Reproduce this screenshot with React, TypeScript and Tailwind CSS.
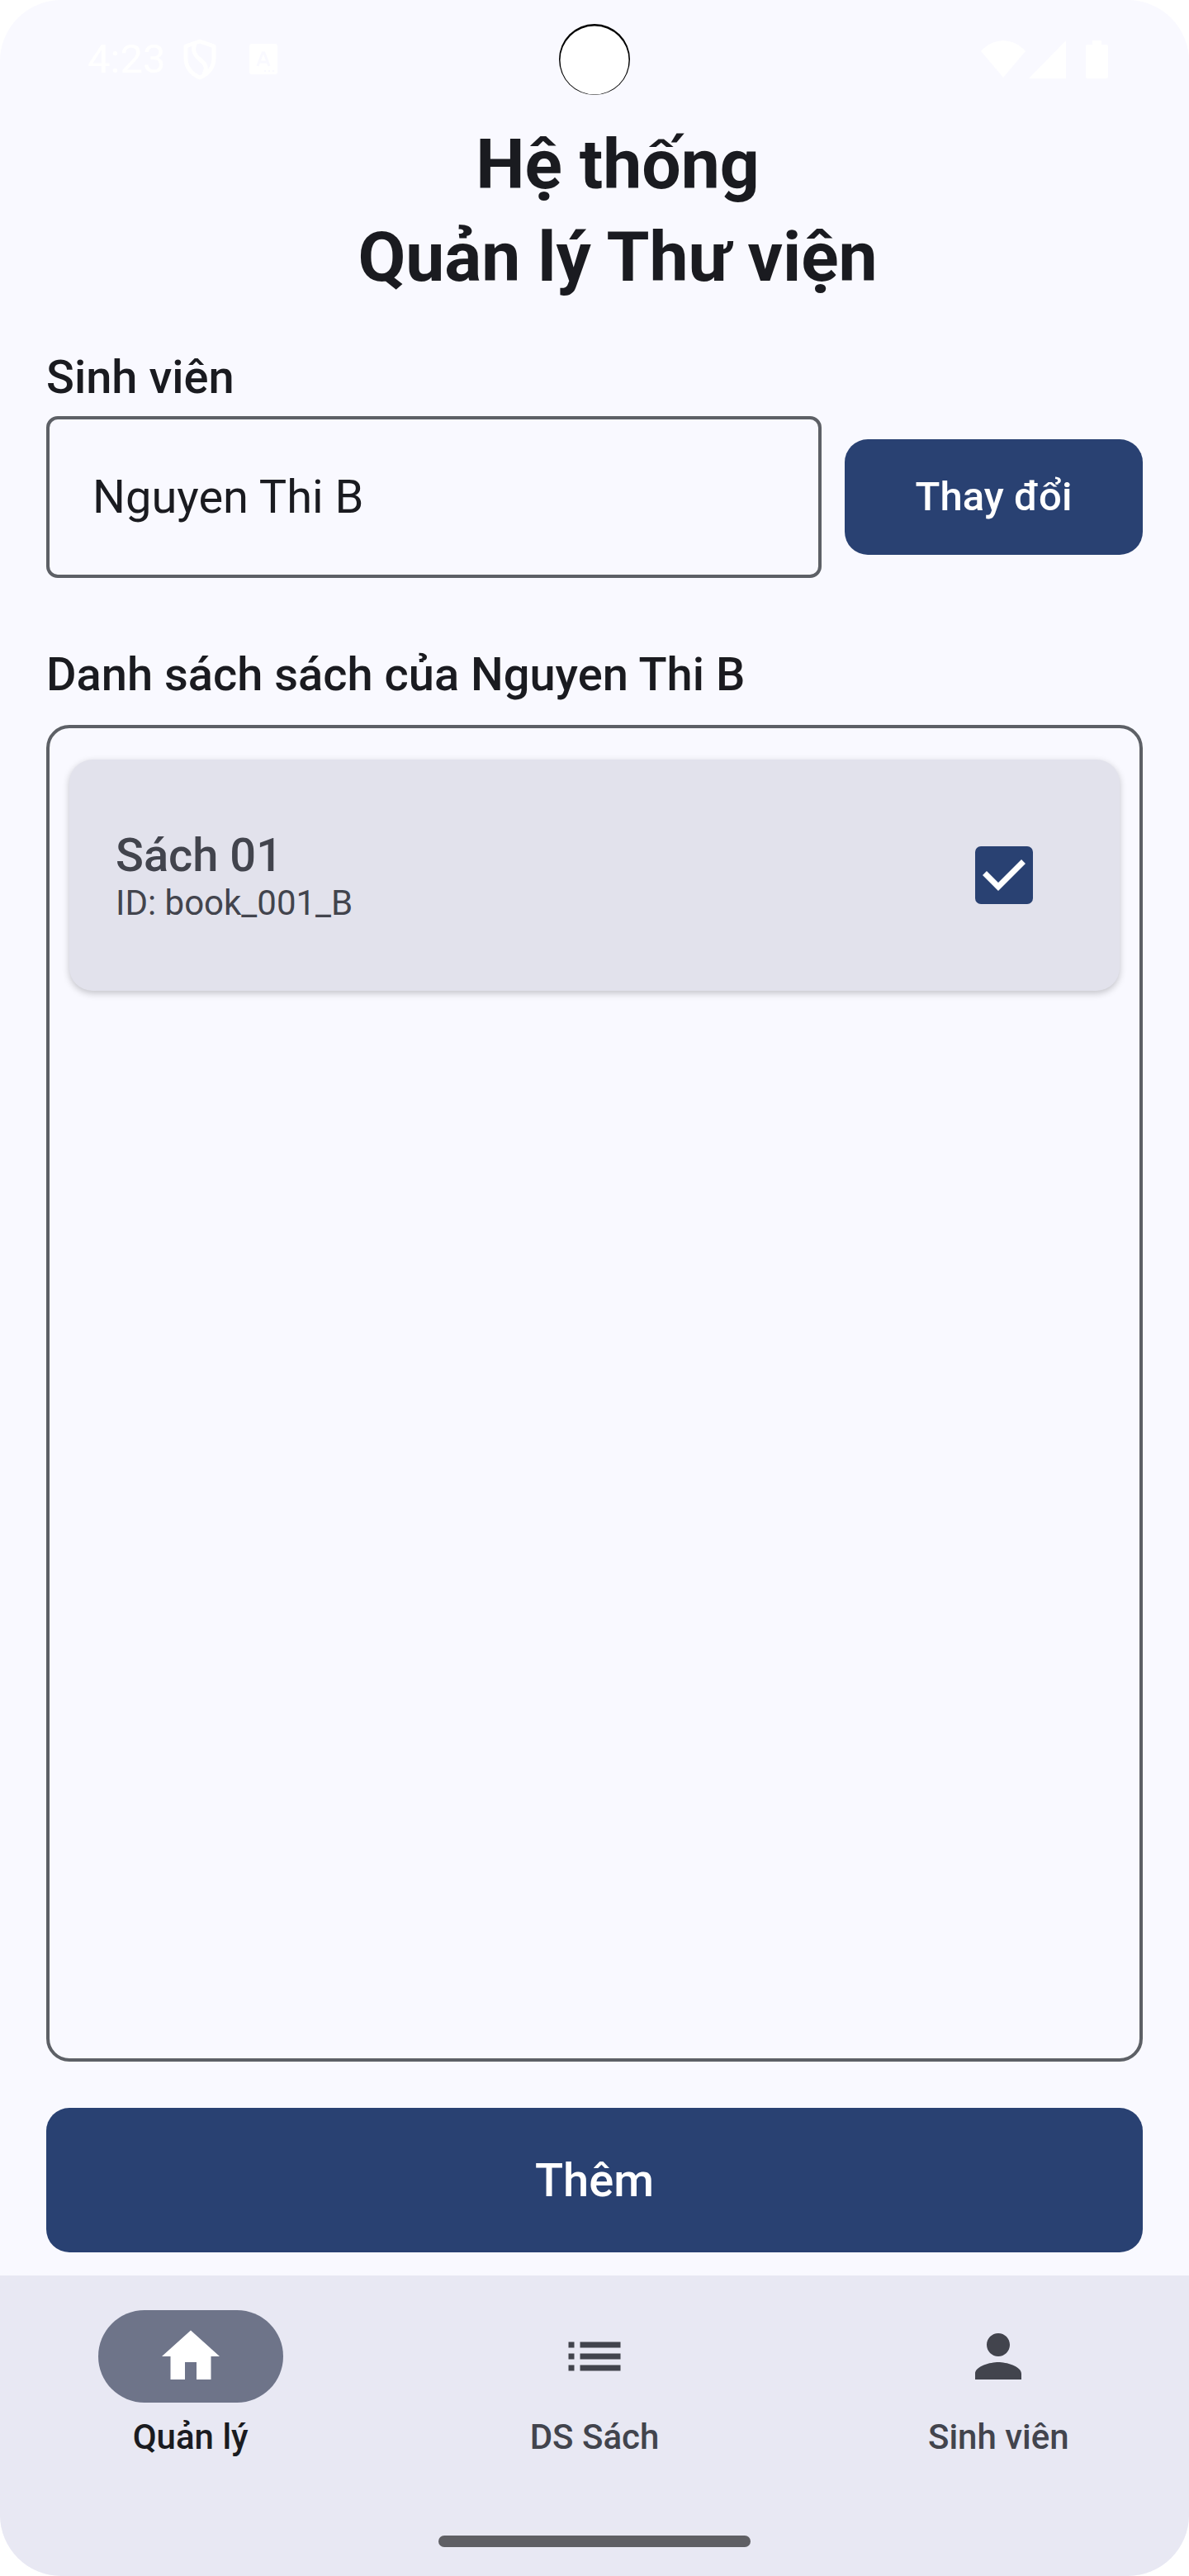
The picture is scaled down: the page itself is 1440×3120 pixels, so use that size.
import { useState } from "react";
import type { ReactNode } from "react";

type Tab = { label: string; path: string };

const tabs: Tab[] = [
  { label: "Quản lý", path: "M10 20v-6h4v6h5v-8h3L12 3 2 12h3v8z" },
  {
    label: "DS Sách",
    path: "M3 13h2v-2H3v2zm0 4h2v-2H3v2zm0-8h2V7H3v2zm4 4h14v-2H7v2zm0 4h14v-2H7v2zM7 7v2h14V7H7z",
  },
  {
    label: "Sinh viên",
    path: "M12 12c2.21 0 4-1.79 4-4s-1.79-4-4-4-4 1.79-4 4 1.79 4 4 4zm0 2c-2.67 0-8 1.34-8 4v2h16v-2c0-2.66-5.33-4-8-4z",
  },
];

function StatusBar() {
  return (
    <div className="grid h-36 grid-cols-[1fr_auto_1fr] items-center text-white">
      <div className="flex items-center pl-[106px]">
        <span className="text-[49px] leading-[56px]">4:23</span>
        <svg viewBox="0 0 40 50" className="ml-[22px] h-[50px] w-10" fill="none" stroke="currentColor" strokeWidth="5" aria-hidden="true">
          <path d="M20 3 3 9v15c0 10 7 19 17 23 10-4 17-13 17-23V9z" strokeLinejoin="round" />
          <path d="M14 6C11 14 13 19 20 25 28 31 29 36 25 43" />
        </svg>
        <svg viewBox="0 0 34 38" className="ml-10 h-[38px] w-[34px]" aria-hidden="true">
          <rect width="34" height="37" rx="3" fill="currentColor" />
          <path d="M10 27 16 11h2l6 16M12 22h10" fill="none" stroke="#f9f9ff" strokeWidth="3" />
          <path d="M18 33h2m3 0h2m3 0h2" stroke="#f9f9ff" strokeWidth="2" />
        </svg>
      </div>
      <svg viewBox="0 0 86 86" className="size-[86px]" aria-hidden="true">
        <circle cx="43" cy="43" r="43" fill="#000" />
        <circle cx="43" cy="44" r="41.5" fill="#fff" />
      </svg>
      <div className="flex items-center justify-end pr-[98px]">
        <svg viewBox="0 0 54 46" className="h-[46px] w-[54px]" fill="currentColor" aria-hidden="true">
          <path d="M0 13C15-4 39-4 54 13L27 45z" />
        </svg>
        <svg viewBox="0 0 45 46" className="ml-1 h-[46px] w-[45px]" fill="currentColor" aria-hidden="true">
          <path d="M45 0v46H0z" />
        </svg>
        <svg viewBox="0 0 27 46" className="ml-6 h-[46px] w-[27px]" fill="currentColor" aria-hidden="true">
          <path d="M8 0h11v5h6q2 0 2 2v37q0 2-2 2H2q-2 0-2-2V7q0-2 2-2h6z" />
        </svg>
      </div>
    </div>
  );
}

function SectionTitle({ children }: { children: ReactNode }) {
  return <h2 className="text-[56px] leading-[84px] font-medium">{children}</h2>;
}

function BookCard({ title, id }: { title: string; id: string }) {
  const [checked, setChecked] = useState(true);
  return (
    <li className="flex h-[280px] items-center justify-between rounded-[28px] bg-[#e2e2ec] pr-[105px] pl-14 text-[#42444d] shadow-[0_3px_8px_rgba(0,0,0,0.22)]">
      <label htmlFor={id}>
        <span className="block text-[56px] leading-[68px] font-medium">{title}</span>
        <span className="block text-[42px] leading-[48px]">ID: {id}</span>
      </label>
      <span className="relative size-[70px]">
        <input
          id={id}
          type="checkbox"
          checked={checked}
          onChange={(e) => setChecked(e.target.checked)}
          className="block size-[70px] appearance-none rounded-[7px] border-[7px] border-[#42444d] checked:border-[#294172] checked:bg-[#294172]"
        />
        {checked && (
          <svg viewBox="0 0 70 70" className="pointer-events-none absolute inset-0" fill="none" stroke="#fff" strokeWidth="7" aria-hidden="true">
            <path d="M11.5 32.5 28 49 58.5 18.5" />
          </svg>
        )}
      </span>
    </li>
  );
}

export default function App() {
  const [active, setActive] = useState(0);
  const [name, setName] = useState("Nguyen Thi B");

  return (
    <div className="min-h-screen bg-white font-['Roboto',sans-serif]">
      <div className="flex min-h-screen flex-col overflow-hidden rounded-[74px] bg-[#f9f9ff] text-[#1a1b20]">
        <StatusBar />
        <main className="flex flex-1 flex-col px-14 pb-7">
          <h1 className="pl-14 text-center text-[84px] leading-[112px] font-bold">
            Hệ thống
            <br />
            Quản lý Thư viện
          </h1>

          <label htmlFor="student" className="mt-[47px] text-[56px] leading-[84px] font-medium">
            Sinh viên
          </label>
          <div className="mt-[5px] flex items-center gap-7">
            <input
              id="student"
              type="text"
              value={name}
              onChange={(e) => setName(e.target.value)}
              className="h-[196px] min-w-0 flex-1 rounded-[14px] border-4 border-[#5d6066] bg-transparent px-[52px] text-[56px] leading-[84px]"
            />
            <button type="button" className="h-[140px] w-[361px] rounded-[28px] bg-[#294172] text-[49px] leading-[70px] font-medium text-white">
              Thay đổi
            </button>
          </div>

          <div className="mt-[75px] flex flex-1 flex-col gap-[19px]">
            <SectionTitle>Danh sách sách của Nguyen Thi B</SectionTitle>
            <ul className="flex-1 rounded-[28px] border-4 border-[#5d6066] px-6 pt-[38px]">
              <BookCard title="Sách 01" id="book_001_B" />
            </ul>
          </div>

          <button type="button" className="mt-14 h-[175px] rounded-[28px] bg-[#294172] text-[56px] leading-[84px] font-medium text-white">
            Thêm
          </button>
        </main>

        <nav className="bg-[#e8e8f3] pt-[42px] pb-[35px]">
          <div className="flex gap-7">
            {tabs.map((tab, i) => (
              <button
                key={tab.label}
                type="button"
                aria-current={i === active ? "page" : undefined}
                onClick={() => setActive(i)}
                className={
                  i === active
                    ? "flex flex-1 flex-col items-center gap-3.5 text-[#1a1b20]"
                    : "flex flex-1 flex-col items-center gap-3.5 text-[#42444d]"
                }
              >
                <span
                  className={
                    i === active
                      ? "flex h-28 w-56 items-center justify-center rounded-full bg-[#6e7489] text-white"
                      : "flex h-28 w-56 items-center justify-center"
                  }
                >
                  <svg viewBox="0 0 24 24" className="size-[84px]" fill="currentColor" aria-hidden="true">
                    <path d={tab.path} />
                  </svg>
                </span>
                <span className="text-[42px] leading-[56px] font-medium">{tab.label}</span>
              </button>
            ))}
          </div>
          <div className="mx-auto mt-[91px] h-3.5 w-[378px] rounded-full bg-[#5f5f64]" />
        </nav>
      </div>
    </div>
  );
}
